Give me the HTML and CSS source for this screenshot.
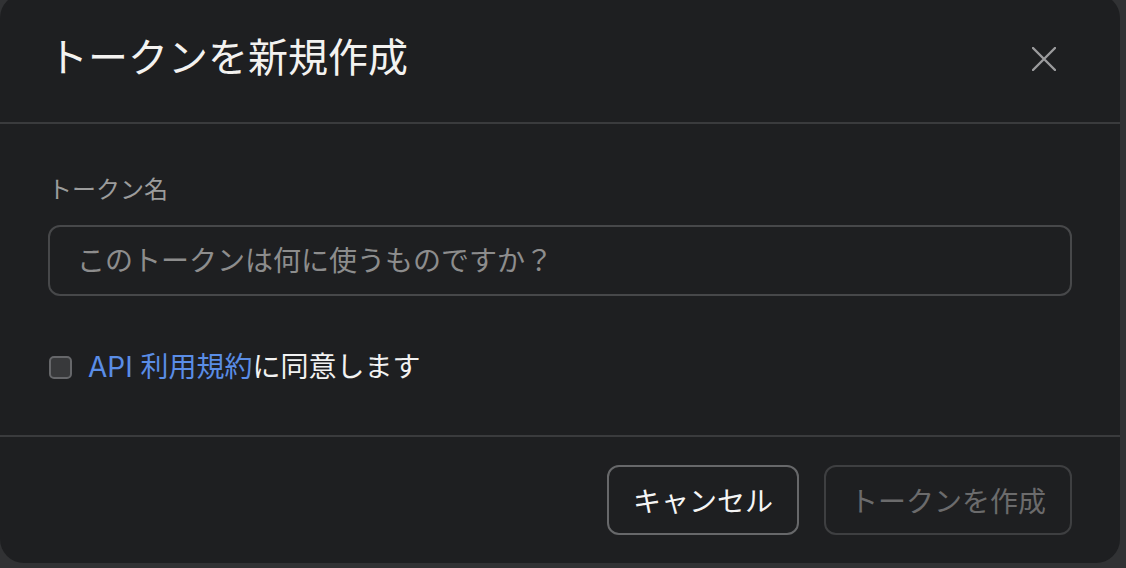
FILE: index.html
```html
<!DOCTYPE html>
<html lang="ja">
<head>
    <meta charset="UTF-8">
    <meta name="viewport" content="width=device-width, initial-scale=1.0">
    <title>トークンを新規作成</title>
    <link rel="stylesheet" href="styles.css">
</head>
<body>
    <div class="dialog">
        <!-- Header -->
        <div class="dialog-header">
            <h1 class="dialog-title">トークンを新規作成</h1>
            <button class="close-btn" aria-label="閉じる">
                <svg width="24" height="24" viewBox="0 0 24 24">
                    <path d="M1 1 L23 23 M23 1 L1 23" stroke="#9b9b9d" stroke-width="2.4" stroke-linecap="round" fill="none"/>
                </svg>
            </button>
        </div>

        <!-- Body -->
        <div class="dialog-body">
            <label class="field-label" for="tokenName">トークン名</label>
            <input type="text" id="tokenName" class="text-input" placeholder="このトークンは何に使うものですか？">

            <label class="agree-row">
                <input type="checkbox" class="agree-check">
                <span><a href="#" class="terms-link">API 利用規約</a>に同意します</span>
            </label>
        </div>

        <!-- Footer -->
        <div class="dialog-footer">
            <button class="btn btn-cancel">キャンセル</button>
            <button class="btn btn-create" disabled>トークンを作成</button>
        </div>
    </div>
</body>
</html>
```

FILE: styles.css
```css
html, body {
    margin: 0;
    height: 100%;
}
body {
    background: #313234;
    font-family: Inter, "Noto Sans CJK JP", sans-serif;
    overflow: hidden;
}
.dialog {
    width: 1120px;
    margin-top: -6px;
    background: #1e1f21;
    border-radius: 24px;
}
.dialog-header {
    height: 128px;
    display: flex;
    align-items: center;
    justify-content: space-between;
    padding: 0 64px 0 48px;
    border-bottom: 2px solid #3a3b3d;
}
.dialog-title {
    margin: 0;
    font-size: 40px;
    font-weight: 400;
    color: #f3f2f0;
    line-height: 1;
}
.close-btn {
    background: none;
    border: none;
    padding: 0;
    width: 24px;
    height: 24px;
    margin-top: 2px;
    cursor: pointer;
}
.dialog-body {
    padding: 48px 48px 48px;
    display: flex;
    flex-direction: column;
}
.field-label {
    font-size: 24px;
    line-height: 36px;
    color: #9c9c9c;
    margin-bottom: 17px;
}
.text-input {
    box-sizing: border-box;
    width: 100%;
    height: 71px;
    padding: 0 27px;
    background: transparent;
    border: 2px solid #47484a;
    border-radius: 12px;
    font-family: inherit;
    font-size: 28px;
    color: #f0f0f0;
    outline: none;
}
.text-input::placeholder {
    color: #8d8d8d;
}
.agree-row {
    display: flex;
    align-items: center;
    gap: 16px;
    margin-top: 51px;
    font-size: 28px;
    line-height: 40px;
    color: #f2f2f2;
}
.agree-check {
    appearance: none;
    -webkit-appearance: none;
    margin: 0 0 0 1px;
    width: 23px;
    height: 23px;
    box-sizing: border-box;
    border: 2px solid #66676a;
    border-radius: 5px;
    background: #38393b;
}
.terms-link {
    color: #5a8de6;
    text-decoration: none;
}
.dialog-footer {
    border-top: 2px solid #3a3b3d;
    padding: 28px 48px 28px;
    display: flex;
    justify-content: flex-end;
    gap: 25px;
}
.btn {
    height: 70px;
    padding: 0 24px;
    background: transparent;
    border: 2px solid #67686a;
    border-radius: 12px;
    font-family: inherit;
    font-size: 28px;
    color: #f5f5f5;
    cursor: pointer;
}
.btn-create {
    border-color: #3e3f41;
    color: #6b6b6c;
    cursor: default;
}
```
